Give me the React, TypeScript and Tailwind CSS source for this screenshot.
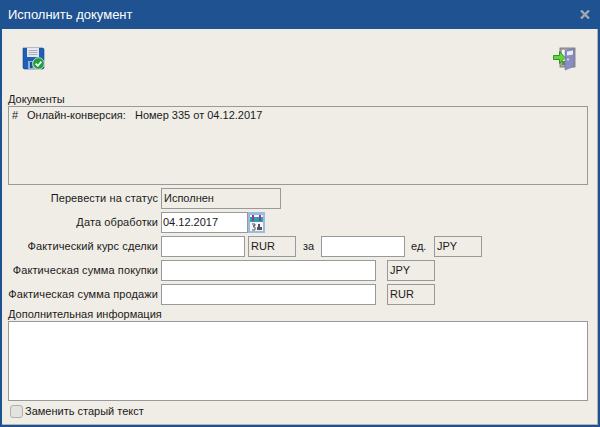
const font = "font-['Liberation_Sans',sans-serif]";

function FloppyIcon() {
  return (
    <svg width="23" height="23" viewBox="0 0 23 23">
      <path d="M1 1h20l1 1v19l-1 1H2l-1-1z" fill="#1f5fb4" stroke="#16478c" strokeWidth="0.6" />
      <rect x="5" y="1" width="12" height="9" fill="#e6e8ee" />
      <path d="M6.5 3.5h9M6.5 5.5h9M6.5 7.5h9" stroke="#a9b1c2" strokeWidth="1" />
      <rect x="6" y="14" width="9" height="8" fill="#8fb0dc" />
      <rect x="8" y="15" width="2.5" height="6" fill="#1f4f94" />
      <circle cx="16.5" cy="16.5" r="5.8" fill="#20a03a" stroke="#e9efe6" strokeWidth="0.8" />
      <path d="M13.6 16.6l2.2 2.2 3.6-4.2" fill="none" stroke="#fff" strokeWidth="1.7" />
    </svg>
  );
}

function ExitIcon() {
  return (
    <svg width="23" height="24" viewBox="0 0 23 24">
      <rect x="7" y="1" width="15" height="19" fill="#a9a9a6" stroke="#6f706e" strokeWidth="0.8" />
      <rect x="9" y="3" width="4" height="15" fill="#f7f8fb" />
      <rect x="9" y="14" width="3" height="4" fill="#4f9d2f" />
      <path d="M12 3.5l9-2v18l-9 3.5z" fill="#8a8cc4" stroke="#6a6ba6" strokeWidth="0.5" />
      <path d="M14 4.5l6-1v4l-6 1z" fill="#e9ebf7" />
      <circle cx="15" cy="12.5" r="1" fill="#e9ebf7" />
      <path d="M0.5 8.5h6v-4l5.5 6-5.5 6v-4h-6z" fill="#63d43a" stroke="#2d8a1e" strokeWidth="0.9" />
    </svg>
  );
}

function CalendarIcon() {
  return (
    <svg width="17" height="21" viewBox="0 0 17 21">
      <rect width="17" height="21" fill="#9dbbe0" />
      <rect x="2" y="3" width="13" height="16" fill="#f5f6f6" />
      <rect x="2" y="5" width="13" height="5" fill="#2e9fb4" />
      <path d="M5 3v6M12 3v6" stroke="#8c3d8c" strokeWidth="2" />
      <path d="M4 12h3v1.5h-1.5v1.5h1.5v3h-3" fill="none" stroke="#555" strokeWidth="1" />
      <rect x="10" y="12" width="2" height="3" fill="#555" />
      <rect x="9" y="15" width="5" height="3" fill="#555" />
    </svg>
  );
}

function Label({ text }: { text: string }) {
  return <span className="w-[153px] shrink-0 whitespace-nowrap pr-[3px] text-right tracking-[0.1px]">{text}</span>;
}

function Input({ width, value }: { width: string; value?: string }) {
  return (
    <div className={`${width} flex h-[21px] shrink-0 items-center border border-[#999] bg-white px-px`}>
      {value}
    </div>
  );
}

function ReadOnly({ width, value }: { width: string; value: string }) {
  return (
    <div className={`${width} flex h-[21px] shrink-0 items-center border border-[#999] px-[2px]`}>
      {value}
    </div>
  );
}

export default function App() {
  return (
    <div className={`${font} flex h-[427px] w-[600px] flex-col overflow-hidden bg-[#1e5290] text-[11px] leading-[13px] text-[#1a1a1a]`}>
      <header className="flex h-[29px] shrink-0 items-center justify-between pl-2 pr-[10px] text-[13px] text-white">
        <span>Исполнить документ</span>
        <svg width="10" height="9" viewBox="0 0 10 9">
          <path d="M1 0.5l8 8M9 0.5l-8 8" stroke="#a3a8b0" strokeWidth="2.4" />
        </svg>
      </header>

      <main className="mb-[2px] ml-[2px] mr-[2px] flex flex-1 flex-col border-b border-r border-[#b5b3ac] bg-[#f0ede6] pl-[6px] pr-[9px]">
        <div className="flex h-[64px] shrink-0 items-start justify-between pl-[14px] pr-[12px] pt-[18px]">
          <FloppyIcon />
          <ExitIcon />
        </div>

        <div className="h-[13px] shrink-0">Документы</div>
        <div className="flex h-[79px] shrink-0 items-start border border-[#999] px-[3px] py-[2px]">
          <span className="w-[15px]">#</span>
          <span className="whitespace-pre">Онлайн-конверсия:   Номер 335 от 04.12.2017</span>
        </div>

        <div className="mt-[3px] flex flex-col gap-[3px]">
          <div className="flex items-center">
            <Label text="Перевести на статус" />
            <ReadOnly width="w-[120px]" value="Исполнен" />
          </div>
          <div className="flex items-center">
            <Label text="Дата обработки" />
            <Input width="w-[87px]" value="04.12.2017" />
            <CalendarIcon />
          </div>
          <div className="flex items-center">
            <Label text="Фактический курс сделки" />
            <Input width="w-[84px]" />
            <div className="ml-[3px]"><ReadOnly width="w-[48px]" value="RUR" /></div>
            <span className="ml-[7px] w-[18px]">за</span>
            <Input width="w-[84px]" />
            <span className="ml-[6px] w-[23px]">ед.</span>
            <ReadOnly width="w-[48px]" value="JPY" />
          </div>
          <div className="flex items-center">
            <Label text="Фактическая сумма покупки" />
            <Input width="w-[215px]" />
            <div className="ml-[11px]"><ReadOnly width="w-[48px]" value="JPY" /></div>
          </div>
          <div className="flex items-center">
            <Label text="Фактическая сумма продажи" />
            <Input width="w-[215px]" />
            <div className="ml-[11px]"><ReadOnly width="w-[48px]" value="RUR" /></div>
          </div>
        </div>

        <div className="mt-[3px] h-[13px] shrink-0">Дополнительная информация</div>
        <div className="h-[80px] shrink-0 border border-[#999] bg-white" />

        <label className="mt-[4px] flex items-center gap-[2px] pl-[2px]">
          <span className="h-[13px] w-[13px] rounded-[3px] border border-[#b0b0b0] bg-[#e2e2e0]" />
          Заменить старый текст
        </label>
      </main>
    </div>
  );
}
